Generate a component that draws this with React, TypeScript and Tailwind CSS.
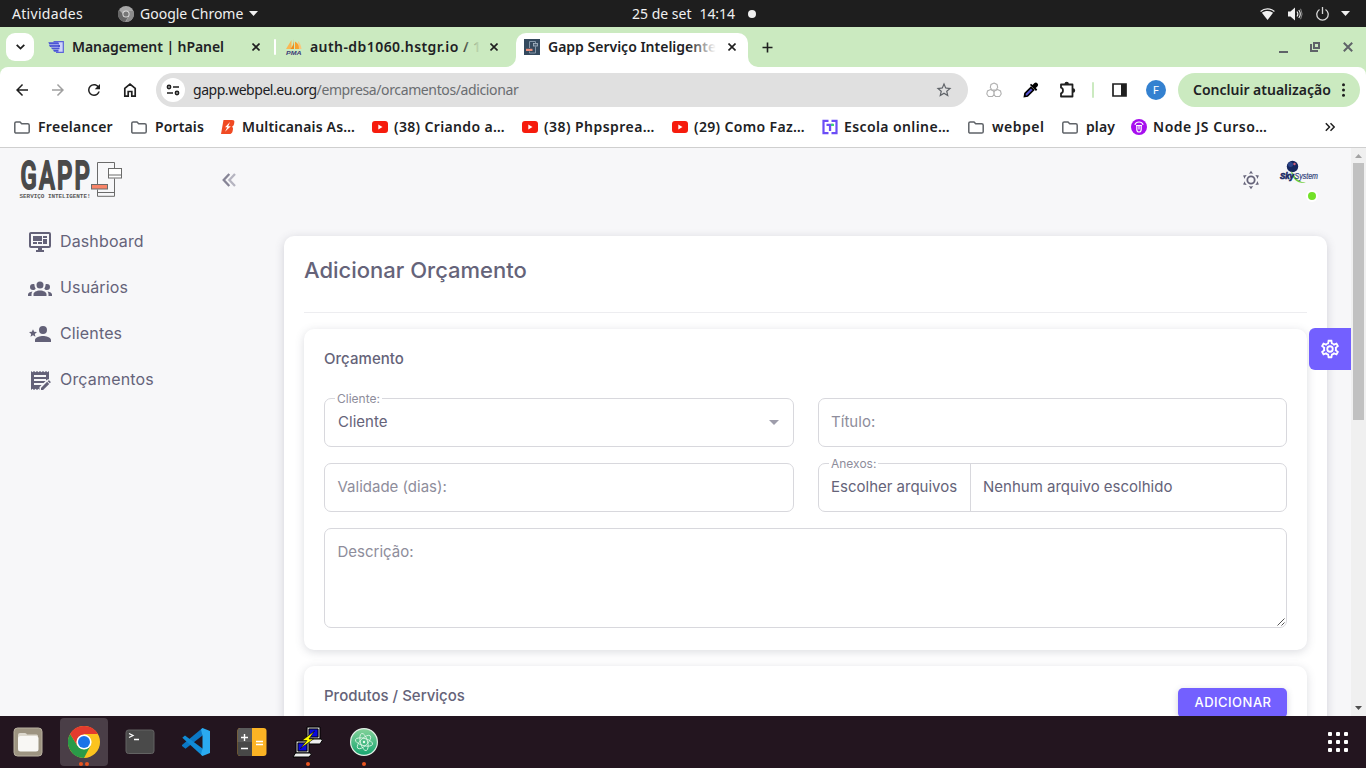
import React from 'react';

const ICONS = {
  dashboard:
    'M21,16V4H3V16H21M21,2A2,2 0 0,1 23,4V16A2,2 0 0,1 21,18H14V20H16V22H8V20H10V18H3C1.89,18 1,17.1 1,16V4C1,2.89 1.89,2 3,2H21M5,6H14V11H5V6M15,6H19V8H15V6M19,9V14H15V9H19M5,12H9V14H5V12M10,12H14V14H10V12Z',
  group:
    'M12,5.5A3.5,3.5 0 0,1 15.5,9A3.5,3.5 0 0,1 12,12.5A3.5,3.5 0 0,1 8.5,9A3.5,3.5 0 0,1 12,5.5M5,8C5.56,8 6.08,8.15 6.53,8.42C6.38,9.85 6.8,11.27 7.66,12.38C7.16,13.34 6.16,14 5,14A3,3 0 0,1 2,11A3,3 0 0,1 5,8M19,8A3,3 0 0,1 22,11A3,3 0 0,1 19,14C17.84,14 16.84,13.34 16.34,12.38C17.2,11.27 17.62,9.85 17.47,8.42C17.92,8.15 18.44,8 19,8M5.5,18.25C5.5,16.18 8.41,14.5 12,14.5C15.59,14.5 18.5,16.18 18.5,18.25V20H5.5V18.25M0,20V18.5C0,17.11 1.89,15.94 4.45,15.6C3.86,16.28 3.5,17.22 3.5,18.25V20H0M24,20H20.5V18.25C20.5,17.22 20.14,16.28 19.55,15.6C22.11,15.94 24,17.11 24,18.5V20Z',
  star:
    'M15,14C12.33,14 7,15.33 7,18V20H23V18C23,15.33 17.67,14 15,14M15,12A4,4 0 0,0 19,8A4,4 0 0,0 15,4A4,4 0 0,0 11,8A4,4 0 0,0 15,12M5,13.28L7.45,14.77L6.8,11.96L9,10.08L6.11,9.83L5,7.19L3.87,9.83L1,10.08L3.18,11.96L2.5,14.77L5,13.28Z',
  receipt:
    'M3,22V3L4.5,4.2L6,3L7.5,4.2L9,3L10.5,4.2L12,3L13.5,4.2L15,3L16.5,4.2L18,3L19.5,4.2L21,3V11.2C20.2,11 19.4,11.3 18.8,11.9L18,12.6V11H6V13H17.6L15.6,15H6V17H13.6L11.5,19.1V22L10.5,20.8L9,22L7.5,20.8L6,22L4.5,20.8L3,22M6,7V9H18V7H6M13,22V19.9L19.1,13.8L21.2,15.9L15.1,22H13M22.6,14.5L21.8,15.3L19.7,13.2L20.5,12.4C20.7,12.2 21.1,12.2 21.3,12.4L22.6,13.7C22.8,13.9 22.8,14.3 22.6,14.5Z',
  sun:
    'M12,7A5,5 0 0,1 17,12A5,5 0 0,1 12,17A5,5 0 0,1 7,12A5,5 0 0,1 12,7M12,9A3,3 0 0,0 9,12A3,3 0 0,0 12,15A3,3 0 0,0 15,12A3,3 0 0,0 12,9M12,2L14.39,5.42C13.65,5.15 12.84,5 12,5C11.16,5 10.35,5.15 9.61,5.42L12,2M3.34,7L7.5,6.65C6.9,7.16 6.36,7.78 5.94,8.5C5.5,9.24 5.25,10 5.11,10.79L3.34,7M3.36,17L5.12,13.23C5.26,14 5.53,14.78 5.95,15.5C6.37,16.24 6.91,16.86 7.5,17.37L3.36,17M20.65,7L18.88,10.79C18.74,10 18.47,9.23 18.05,8.5C17.63,7.78 17.1,7.15 16.5,6.64L20.65,7M20.64,17L16.5,17.36C17.09,16.85 17.62,16.22 18.04,15.5C18.46,14.77 18.73,14 18.87,13.21L20.64,17M12,22L9.59,18.56C10.33,18.83 11.14,19 12,19C12.82,19 13.63,18.83 14.37,18.56L12,22Z',
  cog:
    'M12,8A4,4 0 0,1 16,12A4,4 0 0,1 12,16A4,4 0 0,1 8,12A4,4 0 0,1 12,8M12,10A2,2 0 0,0 10,12A2,2 0 0,0 12,14A2,2 0 0,0 14,12A2,2 0 0,0 12,10M10,22C9.75,22 9.54,21.82 9.5,21.58L9.13,18.93C8.5,18.68 7.96,18.34 7.44,17.94L4.95,18.95C4.73,19.03 4.46,18.95 4.34,18.73L2.34,15.27C2.21,15.05 2.27,14.78 2.46,14.63L4.57,12.97L4.5,12L4.57,11L2.46,9.37C2.27,9.22 2.21,8.95 2.34,8.73L4.34,5.27C4.46,5.05 4.73,4.96 4.95,5.05L7.44,6.05C7.96,5.66 8.5,5.32 9.13,5.07L9.5,2.42C9.54,2.18 9.75,2 10,2H14C14.25,2 14.46,2.18 14.5,2.42L14.87,5.07C15.5,5.32 16.04,5.66 16.56,6.05L19.05,5.05C19.27,4.96 19.54,5.05 19.66,5.27L21.66,8.73C21.79,8.95 21.73,9.22 21.54,9.37L19.43,11L19.5,12L19.43,13L21.54,14.63C21.73,14.78 21.79,15.05 21.66,15.27L19.66,18.73C19.54,18.95 19.27,19.04 19.05,18.95L16.56,17.95C16.04,18.34 15.5,18.68 14.87,18.93L14.5,21.58C14.46,21.82 14.25,22 14,22H10M11.25,4L10.88,6.61C9.68,6.86 8.62,7.5 7.85,8.39L5.44,7.35L4.69,8.65L6.8,10.2C6.4,11.37 6.4,12.64 6.8,13.8L4.68,15.36L5.43,16.66L7.86,15.62C8.63,16.5 9.68,17.14 10.87,17.38L11.24,20H12.76L13.13,17.39C14.32,17.14 15.37,16.5 16.14,15.62L18.57,16.66L19.32,15.36L17.2,13.81C17.6,12.64 17.6,11.37 17.2,10.2L19.31,8.65L18.56,7.35L16.15,8.39C15.38,7.5 14.32,6.86 13.12,6.62L12.75,4H11.25Z',
  arrowBack: 'M20,11H7.83L13.42,5.41L12,4L4,12L12,20L13.41,18.59L7.83,13H20V11Z',
  arrowForward: 'M4,11H16.17L10.58,5.41L12,4L20,12L12,20L10.59,18.59L16.17,13H4V11Z',
  refresh:
    'M17.65,6.35C16.2,4.9 14.21,4 12,4A8,8 0 0,0 4,12A8,8 0 0,0 12,20C15.73,20 18.84,17.45 19.73,14H17.65C16.83,16.33 14.61,18 12,18A6,6 0 0,1 6,12A6,6 0 0,1 12,6C13.66,6 15.14,6.69 16.22,7.78L13,11H20V4L17.65,6.35Z',
  starOutline:
    'M12,15.39L8.24,17.66L9.23,13.38L5.91,10.5L10.29,10.13L12,6.09L13.71,10.13L18.09,10.5L14.77,13.38L15.76,17.66M22,9.24L14.81,8.63L12,2L9.19,8.63L2,9.24L7.45,13.97L5.82,21L12,17.27L18.18,21L16.54,13.97L22,9.24Z',
};

function Icon({ d, className = '' }: { d: string; className?: string }) {
  return (
    <svg viewBox="0 0 24 24" className={`shrink-0 ${className}`} fill="currentColor">
      <path d={d} />
    </svg>
  );
}

/* ---------- desktop top bar ---------- */

function TopBar() {
  return (
    <header className="grid h-[27px] shrink-0 grid-cols-[1fr_auto_1fr] items-center bg-[#1e1e1e] text-sm leading-none text-[#f0f0f0]">
      <div className="flex items-center pl-3">
        <span className="w-[106px] tracking-[0.3px]">Atividades</span>
        <svg className="mr-1.5 size-4" viewBox="0 0 16 16">
          <circle cx="8" cy="8" r="8" fill="#a8a8a8" />
          <path d="M1 4a8 8 0 0 0 6 12l3-5-5-3z" fill="#666" />
          <path d="M8 16a8 8 0 0 0 7.4-11H10l1 5z" fill="#8a8a8a" />
          <circle cx="8" cy="8" r="3.6" fill="#ddd" />
          <circle cx="8" cy="8" r="2.6" fill="#777" />
        </svg>
        <span>Google Chrome</span>
        <svg className="ml-1.5 h-[5px] w-[9px]" viewBox="0 0 9 5" fill="#f0f0f0"><path d="M0 0h9L4.5 5z" /></svg>
      </div>
      <div className="flex items-center pl-[22px]">
        <span>25 de set</span>
        <span className="ml-2 tracking-[-0.05px]">14:14</span>
        <span className="ml-[13px] size-2 rounded-full bg-[#f0f0f0]" />
      </div>
      <div className="flex items-center justify-end pr-4">
        <svg className="h-3 w-[15px]" viewBox="0 0 15 12" fill="#f0f0f0">
          <path d="M.6 3.5C4.5.1 10.5.1 14.4 3.5" fill="none" stroke="#f0f0f0" strokeWidth="1.2" />
          <path d="M7.5 12 1.9 4.8C5 2.5 10 2.5 13.1 4.8z" />
        </svg>
        <svg className="ml-[13px] h-3.5 w-[15px]" viewBox="0 0 15 14" fill="#f0f0f0">
          <path d="M0 4.5h2.5L7 .5v13L2.5 9.5H0z" />
          <path d="M9 4.5q1.8 2.5 0 5M10.8 3q3 4 0 8" fill="none" stroke="#f0f0f0" strokeWidth="1.1" />
          <path d="M12.6 1.8q3 5.2 0 10.4" fill="none" stroke="#888" />
        </svg>
        <svg className="ml-[13px] h-3.5 w-[13px]" viewBox="0 0 13 14" fill="none" stroke="#d8d8d8" strokeWidth="1.3">
          <path d="M3.5 2.5a5.7 5.7 0 1 0 6 0M6.5 0v7" />
        </svg>
        <svg className="ml-3 h-[5px] w-[9px]" viewBox="0 0 9 5" fill="#f0f0f0"><path d="M0 0h9L4.5 5z" /></svg>
      </div>
    </header>
  );
}

/* ---------- browser tabs ---------- */

function CloseX({ className = '' }: { className?: string }) {
  return (
    <svg viewBox="0 0 8 8" className={`size-2 shrink-0 ${className}`} stroke="#1f1f1f" strokeWidth="1.6">
      <path d="M.5.5l7 7M7.5.5l-7 7" />
    </svg>
  );
}

function HostingerIcon() {
  return (
    <svg className="size-4 shrink-0" viewBox="0 0 16 16">
      <path d="M5.5 2.7h9.8v10.6H8" fill="#cfd4fa" stroke="#5b64d8" strokeWidth="1.2" />
      <path d="M.3 3.2h10l1 2.2H1.3zM1 6h11v2H2zM3 8.5h8.5v1.8H4zM5 10.8h5.5v2H6z" fill="#4a55d4" />
      <path d="M2 5.7h8M3 8.2h7" stroke="#a9aff5" strokeWidth=".6" />
    </svg>
  );
}

function PmaIcon() {
  return (
    <svg className="size-4 shrink-0 overflow-visible" viewBox="0 0 16 16">
      <path d="M5.5 1v9H0z" fill="#f9b754" />
      <path d="M8 0v10H4.5C7 7 8 4 8 0z" fill="#ee8c1a" />
      <path d="M9 2.5c3 1.5 4.5 4.5 5 7.5H9z" fill="#f6a02d" />
      <path d="M12 2c2 2 3 4.5 3.5 8H13z" fill="#f9c77c" />
      <text x="0" y="15.5" textLength="15.5" lengthAdjust="spacingAndGlyphs" fontSize="6" fontWeight="700" fontStyle="italic" fontFamily="Liberation Sans, sans-serif" fill="#3c3a77">PMA</text>
    </svg>
  );
}

function GappIcon() {
  return (
    <svg className="size-4 shrink-0" viewBox="0 0 16 16">
      <rect width="16" height="16" fill="#34495e" />
      <path d="M5.5 9V2.5h6v2M5.5 12.5V14h6V7.5" fill="none" stroke="#8496a8" />
      <rect x="9.5" y="4.5" width="4" height="2.5" fill="#4c6075" stroke="#a9b7c5" strokeWidth=".8" />
      <rect x="2" y="9.8" width="6.5" height="2.2" fill="#ec8f7b" />
    </svg>
  );
}

function TabStrip() {
  return (
    <div className="flex h-10 shrink-0 items-center bg-[#cbeac0] text-sm font-semibold leading-none text-[#202124]">
      <div className="ml-1.5 flex size-7 items-center justify-center rounded-[9px] bg-white">
        <svg className="h-1.5 w-[9px]" viewBox="0 0 9 6" fill="none" stroke="#1f1f1f" strokeWidth="1.8"><path d="M.7.8l3.8 3.8L8.3.8" /></svg>
      </div>
      <div className="ml-1.5 flex h-7 w-[232px] items-center pl-2">
        <HostingerIcon />
        <span className="ml-2 w-[180px] whitespace-nowrap tracking-[-0.07px]">Management | hPanel</span>
        <CloseX />
      </div>
      <div className="mx-0.5 h-4 w-0.5 rounded bg-white" />
      <div className="flex h-7 w-[238px] items-center pl-2">
        <PmaIcon />
        <div className="relative ml-2 w-[170px] overflow-hidden py-1">
          <span className="whitespace-nowrap tracking-[0.43px]">auth-db1060.hstgr.io / 1</span>
          <div className="absolute inset-y-0 right-0 w-5 bg-gradient-to-r from-[#cbeac0]/0 to-[#cbeac0]" />
        </div>
        <CloseX className="ml-2.5" />
      </div>
      <div className="relative flex h-[34px] w-[232px] items-center self-end rounded-t-[10px] bg-white pb-1.5 pl-2">
        <svg className="absolute -left-2.5 bottom-0 size-2.5" viewBox="0 0 10 10" fill="#fff"><path d="M10 0v10H0A10 10 0 0 0 10 0z" /></svg>
        <svg className="absolute -right-2.5 bottom-0 size-2.5" viewBox="0 0 10 10" fill="#fff"><path d="M0 0v10h10A10 10 0 0 1 0 0z" /></svg>
        <GappIcon />
        <div className="relative ml-2 w-[168px] overflow-hidden py-1">
          <span className="whitespace-nowrap">Gapp Serviço Inteligente</span>
          <div className="absolute inset-y-0 right-0 w-7 bg-gradient-to-r from-white/0 to-white" />
        </div>
        <CloseX className="ml-3" />
      </div>
      <svg className="ml-3.5 size-[11px]" viewBox="0 0 11 11" stroke="#1f1f1f" strokeWidth="1.6"><path d="M5.5.5v10M.5 5.5h10" /></svg>
      <div className="ml-auto flex items-center pr-[13px] text-[#5f6368]">
        <svg className="h-[11px] w-[10px]" viewBox="0 0 10 11" fill="currentColor"><path d="M0 9h9v2H0z" /></svg>
        <svg className="ml-[21px] size-[10px]" viewBox="0 0 10 10" fill="none" stroke="currentColor" strokeWidth="2"><path d="M4 1h5v5H4zM1 2v7h7" /></svg>
        <svg className="ml-[23px] size-[10px]" viewBox="0 0 10 10" stroke="currentColor" strokeWidth="2"><path d="M.8.8l8.4 8.4M9.2.8L.8 9.2" /></svg>
      </div>
    </div>
  );
}

/* ---------- toolbar ---------- */

function Toolbar() {
  return (
    <div className="flex h-[46px] shrink-0 items-center bg-[#cbeac0]">
      <div className="flex h-full w-full items-center rounded-t-lg bg-white pl-1">
        <div className="flex w-9 justify-center"><Icon d={ICONS.arrowBack} className="size-[18px] text-[#1f1f1f]" /></div>
        <div className="flex w-9 justify-center"><Icon d={ICONS.arrowForward} className="size-[18px] text-[#a0a0a0]" /></div>
        <div className="flex w-9 justify-center"><Icon d={ICONS.refresh} className="size-[18px] text-[#1f1f1f]" /></div>
        <div className="flex w-9 justify-center">
          <svg className="size-[18px]" viewBox="0 0 18 18" fill="none" stroke="#1f1f1f" strokeWidth="1.7">
            <path d="M3.8 15.2V7.3L9 3.2l5.2 4.1v7.9h-3.4v-4.7H7.2v4.7z" />
          </svg>
        </div>
        <div className="ml-2 flex h-[34px] w-[812px] items-center rounded-full bg-[#e0e0e0] pl-[5px] pr-[15px]">
          <div className="flex size-6 items-center justify-center rounded-full bg-white">
            <svg className="h-3 w-3.5" viewBox="0 0 14 12" fill="none" stroke="#1f1f1f" strokeWidth="1.6">
              <circle cx="3" cy="3" r="1.6" /><path d="M7 3h6M1 9h6" /><circle cx="11" cy="9" r="1.6" />
            </svg>
          </div>
          <span className="ml-2 whitespace-nowrap text-sm leading-none tracking-[-0.46px] text-[#202124]">gapp.webpel.eu.org</span>
          <span className="whitespace-nowrap text-sm leading-none tracking-[-0.38px] text-[#6a6d70]">/empresa/orcamentos/adicionar</span>
          <Icon d={ICONS.starOutline} className="ml-auto size-[18px] text-[#5f6368]" />
        </div>
        <svg className="ml-[18px] size-4" viewBox="0 0 16 16" fill="#fff" stroke="#b0b0b0" strokeWidth="1.1">
          <path d="M4.5 7.5l3 1.5.7 3-1.7 2.5h-4L.8 12l.7-3zM11.5 7.5l3 1.5.7 3-1.7 2.5h-4L7.8 12l.7-3z" />
          <path d="M8 1l3 1.5.7 3L10 8H6L4.3 5.5l.7-3z" />
        </svg>
        <svg className="ml-[21px] size-4" viewBox="0 0 16 16">
          <path d="M1.5 14.5l.5-3 6-6L10.500 8l-6 6z" fill="#5856d6" stroke="#000" strokeWidth="1.7" />
          <path d="M7 3l6 6 1.3-1.5-1.500-1.500 2-2A2.3 2.3 0 0 0 11.5 1l-2 2L8 1.8z" fill="#000" />
        </svg>
        <svg className="ml-[19px] size-[18px]" viewBox="0 0 18 18" fill="none" stroke="#1f1f1f" strokeWidth="1.8" strokeLinejoin="round">
          <path d="M3 3.500h11.500v12H3v-3.200c2.600-.4 2.600-5.200 0-5.600z" />
          <path d="M6.500 3a2.200 2.200 0 0 1 4.400 0zM15 7.300a2.200 2.200 0 0 1 0 4.400z" fill="#1f1f1f" stroke="none" />
        </svg>
        <div className="ml-4 h-4 w-0.5 rounded bg-[#cbeac0]" />
        <svg className="ml-[18px] h-3.5 w-[15px]" viewBox="0 0 15 14"><path d="M1 1h13v12H1z" fill="none" stroke="#1f1f1f" strokeWidth="1.7" /><path d="M9 1h5v12H9z" fill="#1f1f1f" /></svg>
        <div className="ml-[19px] flex size-5 items-center justify-center rounded-full bg-[#3481d0] font-['Roboto',sans-serif] text-[11px] leading-none text-white">F</div>
        <div className="ml-3 flex h-[34px] w-[182px] items-center rounded-full bg-[#cbeac0] pl-[15px] text-sm font-semibold leading-none text-[#202124]">
          <span className="whitespace-nowrap">Concluir atualização</span>
          <svg className="ml-[11px] h-3.5 w-[3px]" viewBox="0 0 3 14" fill="#1f1f1f"><circle cx="1.5" cy="1.7" r="1.5" /><circle cx="1.5" cy="7" r="1.5" /><circle cx="1.5" cy="12.3" r="1.5" /></svg>
        </div>
      </div>
    </div>
  );
}

/* ---------- bookmarks ---------- */

const FolderIcon = () => (
  <svg className="h-[13px] w-4" viewBox="0 0 16 13" fill="none" stroke="#5f6368" strokeWidth="1.5">
    <path d="M.8 2.3Q.8.9 2.2.9H6l1.7 1.8h6Q15.2 2.7 15.2 4.2v6.5q0 1.400-1.500 1.400H2.3Q.8 12.1.8 10.7z" />
  </svg>
);
const YoutubeIcon = () => (
  <svg className="h-3 w-4" viewBox="0 0 16 12"><rect width="16" height="12" rx="3" fill="#f61c0d" /><path d="M6.3 3.5v5L10.5 6z" fill="#fff" /></svg>
);
const BoltIcon = () => (
  <svg className="h-3.5 w-4" viewBox="0 0 16 14">
    <path d="M3.5 0H12q2.800 0 2.300 2.400L14 4.300q-.4 1.900-2 2.500 1.300.8 1 2.200l-.4 2.200q-.6 2.800-3.400 2.800H1z" fill="#f04a23" />
    <path d="M10 2 5 7.3h2.300L5 11.8l5.800-5.600H8.2z" fill="#fff" />
  </svg>
);
const SchoolIcon = () => (
  <svg className="size-4" viewBox="0 0 16 16">
    <path d="M6.5 1.8h-5v12.400h5M9.5 1.8h5v12.400h-5" fill="none" stroke="#6b4df6" strokeWidth="2.2" />
    <path d="M4.500 4.800H11V7H9.200v5H6.900V7H4.500z" fill="#6b4df6" />
    <path d="M9 4.800h3V7H9z" fill="#3ad07c" />
  </svg>
);
const CourseIcon = () => (
  <svg className="size-4" viewBox="0 0 16 16">
    <circle cx="8" cy="8" r="8" fill="#a60fee" />
    <path d="M3.800 5.800Q5 3 8 3t4.200 2.800M5 6.500h6M5.800 7v3.500Q5.800 13 8 13t2.200-2.500V7M8 6.500v4" fill="none" stroke="#fff" strokeWidth="1.2" />
  </svg>
);

const BOOKMARKS = [
  { label: 'Freelancer', Icon: FolderIcon, box: 'w-[117px] gap-2', text: 'tracking-[0.29px]' },
  { label: 'Portais', Icon: FolderIcon, box: 'w-[89px] gap-2', text: 'tracking-[0.13px]' },
  { label: 'Multicanais As…', Icon: BoltIcon, box: 'w-[152px] gap-1.5', text: 'tracking-[0.18px]' },
  { label: '(38) Criando a…', Icon: YoutubeIcon, box: 'w-[150px] gap-1.5', text: 'tracking-[0.35px]' },
  { label: '(38) Phpsprea…', Icon: YoutubeIcon, box: 'w-[150px] gap-1.5', text: 'tracking-[0.46px]' },
  { label: '(29) Como Faz…', Icon: YoutubeIcon, box: 'w-[150px] gap-1.5', text: 'tracking-[0.35px]' },
  { label: 'Escola online…', Icon: SchoolIcon, box: 'w-[146px] gap-1.5', text: 'tracking-[0.4px]' },
  { label: 'webpel', Icon: FolderIcon, box: 'w-[94px] gap-2', text: 'tracking-[0.5px]' },
  { label: 'play', Icon: FolderIcon, box: 'w-[69px] gap-2', text: 'tracking-[0.1px]' },
  { label: 'Node JS Curso…', Icon: CourseIcon, box: 'w-[150px] gap-1.5', text: 'tracking-[0.53px]' },
];

function Bookmarks() {
  return (
    <div className="flex h-[35px] shrink-0 items-center border-b border-[#cfcfcf] bg-white pb-1.5 pl-3.5 text-sm font-semibold leading-none text-[#202124]">
      {BOOKMARKS.map(({ label, Icon: Glyph, box, text }) => (
        <div key={label} className={`flex shrink-0 items-center ${box}`}>
          <Glyph />
          <span className={`whitespace-nowrap ${text}`}>{label}</span>
        </div>
      ))}
      <svg className="ml-auto mr-[31px] size-[10px]" viewBox="0 0 10 10" fill="none" stroke="#1f1f1f" strokeWidth="1.5"><path d="M.8 1.2 4.5 5 .8 8.8M5.5 1.2 9.2 5 5.5 8.8" /></svg>
    </div>
  );
}

/* ---------- page ---------- */

function GappLogo() {
  return (
    <svg className="h-10 w-[106px] overflow-visible" viewBox="0 0 106 40">
      <text x="2.5" y="28.5" textLength="71.5" lengthAdjust="spacingAndGlyphs" letterSpacing="3.5" fontSize="38" fontWeight="500" fontFamily="Roboto, sans-serif" fill="#4a4a4a" stroke="#4a4a4a" strokeWidth="2" strokeLinejoin="round">GAPP</text>
      <text x="1.5" y="37.8" textLength="71" lengthAdjust="spacingAndGlyphs" fontSize="5.2" fontWeight="700" fontFamily="Liberation Mono, monospace" fill="#5a5a5a">SERVIÇO INTELIGENTE!</text>
      <g fill="none" stroke="#6b6b6b">
        <path d="M79.5 24.5v-22h17v6M79.5 29.5v6.800h17V18.500M79.500 32.500h17" />
        <rect x="90.5" y="8.5" width="13" height="9.5" fill="#fff" />
        <path d="M90.5 15h13" />
        <rect x="73.5" y="24.5" width="16" height="4.5" fill="#f88468" />
      </g>
    </svg>
  );
}

function SkyLogo() {
  return (
    <svg className="size-10 overflow-visible" viewBox="0 0 40 40">
      <circle cx="12.5" cy="6.5" r="5.7" fill="#16275f" />
      <circle cx="10.5" cy="4.5" r="2.5" fill="#3a5aa8" opacity=".6" />
      <circle cx="14.5" cy="4" r="1.2" fill="#d8607a" />
      <path d="M11 11Q13 24 26 22.8 17 22 13.5 14z" fill="#6fcf3c" />
      <text x="0" y="18.5" fontSize="9" fontWeight="700" fontStyle="italic" textLength="14" lengthAdjust="spacingAndGlyphs" fontFamily="Liberation Sans, sans-serif" fill="#1c2c66" stroke="#1c2c66" strokeWidth=".7">Sky</text>
      <text x="14.5" y="18.5" fontSize="9" fontStyle="italic" textLength="23.5" lengthAdjust="spacingAndGlyphs" fontFamily="Liberation Sans, sans-serif" fill="#2c3d78" stroke="#2c3d78" strokeWidth=".2">System</text>
    </svg>
  );
}

const MENU = [
  { label: 'Dashboard', d: ICONS.dashboard, text: 'tracking-[0.13px]' },
  { label: 'Usuários', d: ICONS.group, text: 'tracking-[0.14px]' },
  { label: 'Clientes', d: ICONS.star, text: 'tracking-[0.14px]' },
  { label: 'Orçamentos', d: ICONS.receipt, text: 'tracking-[0.17px]' },
];

function Sidebar() {
  return (
    <aside className="flex w-[260px] shrink-0 flex-col">
      <div className="flex h-16 items-center pl-[18px] pr-6">
        <GappLogo />
        <svg className="ml-auto size-[14px]" viewBox="0 0 14 14" fill="none" strokeWidth="2.3">
          <path d="M7.3 1 1.7 7l5.6 6" stroke="#868496" />
          <path d="M13 1 7.4 7l5.6 6" stroke="#b5b4c0" />
        </svg>
      </div>
      <nav className="flex flex-col pl-7 pt-1.5">
        {MENU.map((m) => (
          <div key={m.label} className="flex h-[46px] items-center">
            <Icon d={m.d} className="mt-0.5 size-6 text-[#636178]" />
            <span className={`ml-2 text-base leading-none ${m.text}`}>{m.label}</span>
          </div>
        ))}
      </nav>
    </aside>
  );
}

function FieldBox({ label, className = '', children }: { label?: string; className?: string; children: React.ReactNode }) {
  return (
    <div className={`relative flex rounded-[7px] border border-[#d8d8dd] text-[15px] leading-[22px] ${className}`}>
      {label && (
        <span className="absolute -top-2 left-2.5 bg-white px-0.5 text-xs leading-[15px] text-[#8e8d9b]">{label}</span>
      )}
      {children}
    </div>
  );
}

function BudgetForm() {
  return (
    <section className="h-[321px] shrink-0 rounded-[10px] bg-white px-5 pt-[19px] shadow-[0_2px_10px_rgba(76,78,100,0.2)]">
      <h2 className="text-[15px] font-medium leading-[22px] tracking-[0.05px]">Orçamento</h2>
      <div className="mt-7 grid grid-cols-[470px_469px] gap-x-6 gap-y-4">
        <FieldBox label="Cliente:" className="h-[49px] items-center pb-px pl-[13px] pr-3.5">
          <span className="tracking-[0.02px]">Cliente</span>
          <svg className="ml-auto h-[5px] w-[10px]" viewBox="0 0 10 5" fill="#9e9dab"><path d="M0 0h10L5 5z" /></svg>
        </FieldBox>
        <FieldBox className="h-[49px] items-center pb-px pl-3 text-[#8e8d9b]"><span className="tracking-[0.03px]">Título:</span></FieldBox>
        <FieldBox className="h-[49px] items-center pb-px pl-[12.5px] text-[#8e8d9b]">Validade (dias):</FieldBox>
        <FieldBox label="Anexos:" className="h-[49px]">
          <div className="flex w-[152px] items-center border-r border-[#d8d8dd] pb-px pl-3">Escolher arquivos</div>
          <div className="flex items-center pb-px pl-3">Nenhum arquivo escolhido</div>
        </FieldBox>
        <FieldBox className="col-span-2 h-[100px] pl-[12.5px] pt-3 text-[#8e8d9b]">
          Descrição:
          <svg className="absolute bottom-px right-px size-2" viewBox="0 0 8 8" stroke="#444" strokeWidth=".9"><path d="M.5 7.5l7-7M4.5 7.5l3-3" /></svg>
        </FieldBox>
      </div>
    </section>
  );
}

function Page() {
  return (
    <div className="flex min-h-0 flex-1 overflow-hidden bg-[#f7f7f9] font-['Inter',sans-serif] text-[#656379]">
      <Sidebar />
      <div className="relative flex min-w-0 flex-1 flex-col overflow-hidden px-6">
        <div className="flex h-[88px] shrink-0 items-start justify-end pt-3">
          <Icon d={ICONS.sun} className="mr-[18px] mt-[9px] size-[22px]" />
          <div className="relative mr-[7px]">
            <SkyLogo />
            <span className="absolute bottom-[-2px] right-0.5 size-3 rounded-full border-2 border-white bg-[#72e128]" />
          </div>
        </div>
        <main className="flex h-[680px] shrink-0 flex-col rounded-[10px] bg-white px-5 shadow-[0_2px_10px_rgba(76,78,100,0.22)]">
          <h1 className="h-[76px] shrink-0 pt-[19px] text-[22px] font-medium leading-[30px]">Adicionar Orçamento</h1>
          <div className="mb-4 h-px shrink-0 bg-[#ededf0]" />
          <BudgetForm />
          <section className="mt-4 flex h-[200px] shrink-0 items-start justify-between rounded-[10px] bg-white px-5 pt-[22px] shadow-[0_2px_10px_rgba(76,78,100,0.2)]">
            <h2 className="-mt-[3px] text-[15px] font-medium leading-[22px]">Produtos / Serviços</h2>
            <button className="flex h-[30px] w-[109px] items-center justify-center rounded-[5px] bg-[#7360ff] pb-px pl-px text-[13px] font-medium leading-none tracking-[0.48px] text-white shadow-[0_2px_6px_rgba(76,78,100,0.25)]">ADICIONAR</button>
          </section>
        </main>
        <div className="absolute right-0 top-[180px] flex size-[42px] items-center justify-center rounded-l-md bg-[#7360ff]">
          <Icon d={ICONS.cog} className="size-[22px] text-white" />
        </div>
      </div>
      <div className="flex w-[15px] shrink-0 flex-col items-center bg-[#f0f0f0]">
        <div className="flex h-[15px] items-center"><svg className="h-1 w-[7px]" viewBox="0 0 7 4" fill="#a3a3a3"><path d="M0 4h7L3.5 0z" /></svg></div>
        <div className="h-[257px] w-[11px] bg-[#c1c1c1]" />
        <div className="mt-auto flex h-4 items-center"><svg className="h-1 w-[7px]" viewBox="0 0 7 4" fill="#505050"><path d="M0 0h7L3.5 4z" /></svg></div>
      </div>
    </div>
  );
}

/* ---------- dock ---------- */

function Dock() {
  return (
    <footer className="flex h-[52px] shrink-0 items-center bg-[#23151f]">
      <div className="flex w-14 justify-center">
        <svg className="size-[30px]" viewBox="0 0 30 30">
          <rect x="1" y="1" width="28" height="28" rx="3.5" fill="#9d9481" stroke="#b9b1a0" />
          <path d="M5 8q0-2 2-2h5q1.5 0 2 1.5h9.500q1.500 0 1.500 1.500v5H5z" fill="#dcd8cd" />
          <rect x="5" y="9" width="20.5" height="15.5" rx="2.5" fill="#f8f7f4" />
        </svg>
      </div>
      <div className="mx-1 flex h-12 w-12 flex-col items-center rounded bg-[#4a3e47] pt-2">
        <svg className="size-8 shrink-0" viewBox="0 0 32 32">
          <circle cx="16" cy="16" r="16" fill="#fcc31e" />
          <path d="M2.14 8 9.5 19.75 16 23.5 22.5 19.75 16 32A16 16 0 0 1 2.14 8z" fill="#2a9a48" />
          <path d="M2.14 8A16 16 0 0 1 29.86 8H16L9.5 19.75z" fill="#e33b2e" />
          <circle cx="16" cy="16" r="7.6" fill="#fff" />
          <circle cx="16" cy="16" r="6" fill="#1a73e8" />
        </svg>
        <div className="mt-1 flex gap-0.5"><span className="size-1 rounded-full bg-[#e95420]" /><span className="size-1 rounded-full bg-[#e95420]" /></div>
      </div>
      <div className="flex w-14 justify-center">
        <svg className="h-[26px] w-[30px]" viewBox="0 0 30 26">
          <rect x="1" y="1" width="28" height="23.5" rx="2.5" fill="#4a4a4a" stroke="#636363" />
          <path d="M4 4.5l4 2L4 8.5M9 10.5h5" fill="none" stroke="#fff" strokeWidth="1.3" />
        </svg>
      </div>
      <div className="flex w-14 justify-center">
        <svg className="size-7" viewBox="0 0 28 28">
          <path d="M20.5 0v7.5L3.5 20.7 0 18V17z" fill="#0b77c4" />
          <path d="M.3 9.7 3 7.5l17.5 13V28z" fill="#108bd6" />
          <path d="M20.5 0 28 3v22l-7.5 3-1.5-1.5 1.500-6.500V8L19 1.5z" fill="#2aaaf0" />
        </svg>
      </div>
      <div className="flex w-14 justify-center">
        <svg className="size-[30px]" viewBox="0 0 30 30">
          <rect x=".5" y="1" width="29" height="28" rx="3" fill="#fbb324" />
          <path d="M15 1H3.5q-3 0-3 3v11H15z" fill="#5b5b5b" /><path d="M15 15H.5v11q0 3 3 3H15z" fill="#474747" />
          <path d="M4 10.5h7M7.5 7v7M4 21.5h7M19 14.5h7M19 17.5h7" stroke="#fff" strokeWidth="1.4" />
        </svg>
      </div>
      <div className="flex h-full w-14 flex-col items-center pt-2.5">
        <svg className="mr-0.5 h-8 w-[31px] shrink-0" viewBox="0 0 31 32">
          <g stroke="#000">
            <path d="M15 1h13v12H15z" fill="#cfcfcf" /><path d="M12 17l2.5-4H29l1.5 1-2.5 4H12z" fill="#eee" />
            <path d="M17 3h9v8h-9z" fill="#0a0adf" />
            <path d="M4 15h13v12H4z" fill="#cfcfcf" /><path d="M1 31l2.5-4H18l1.5 1-2.5 3H1z" fill="#eee" />
            <path d="M6 17h9v8H6z" fill="#0a0adf" />
          </g>
          <path d="M22.5 5 10 14.5h5L8.5 22.5l13-9.500H17z" fill="#ff0" stroke="#000" strokeWidth=".6" />
        </svg>
        <span className="mt-1 size-1 rounded-full bg-[#e95420]" />
      </div>
      <div className="flex h-full w-14 flex-col items-center pt-3">
        <svg className="size-7 shrink-0" viewBox="0 0 28 28">
          <defs><linearGradient id="atom" x2="0" y2="1"><stop stopColor="#85d39a" /><stop offset="1" stopColor="#16a570" /></linearGradient></defs>
          <circle cx="14" cy="14" r="13.4" fill="url(#atom)" stroke="#e2efe6" strokeWidth="1.2" />
          <g fill="none" stroke="#d6f2e0" strokeWidth=".9">
            <ellipse cx="14" cy="14" rx="8.8" ry="3.6" transform="rotate(15 14 14)" />
            <ellipse cx="14" cy="14" rx="8.8" ry="3.6" transform="rotate(75 14 14)" />
            <ellipse cx="14" cy="14" rx="8.8" ry="3.6" transform="rotate(-45 14 14)" />
          </g>
          <circle cx="14" cy="14" r="1.2" fill="#e8fff0" />
        </svg>
        <span className="mt-1.5 size-1 rounded-full bg-[#e95420]" />
      </div>
      <div className="ml-auto mr-[18px] grid grid-cols-3 gap-1">
        {Array.from({ length: 9 }, (_, i) => <span key={i} className="size-1 rounded-[1px] bg-white" />)}
      </div>
    </footer>
  );
}

export default function App() {
  return (
    <div className="flex h-[768px] w-[1366px] flex-col overflow-hidden font-['Noto_Sans',sans-serif]">
      <TopBar />
      <TabStrip />
      <Toolbar />
      <Bookmarks />
      <Page />
      <Dock />
    </div>
  );
}
